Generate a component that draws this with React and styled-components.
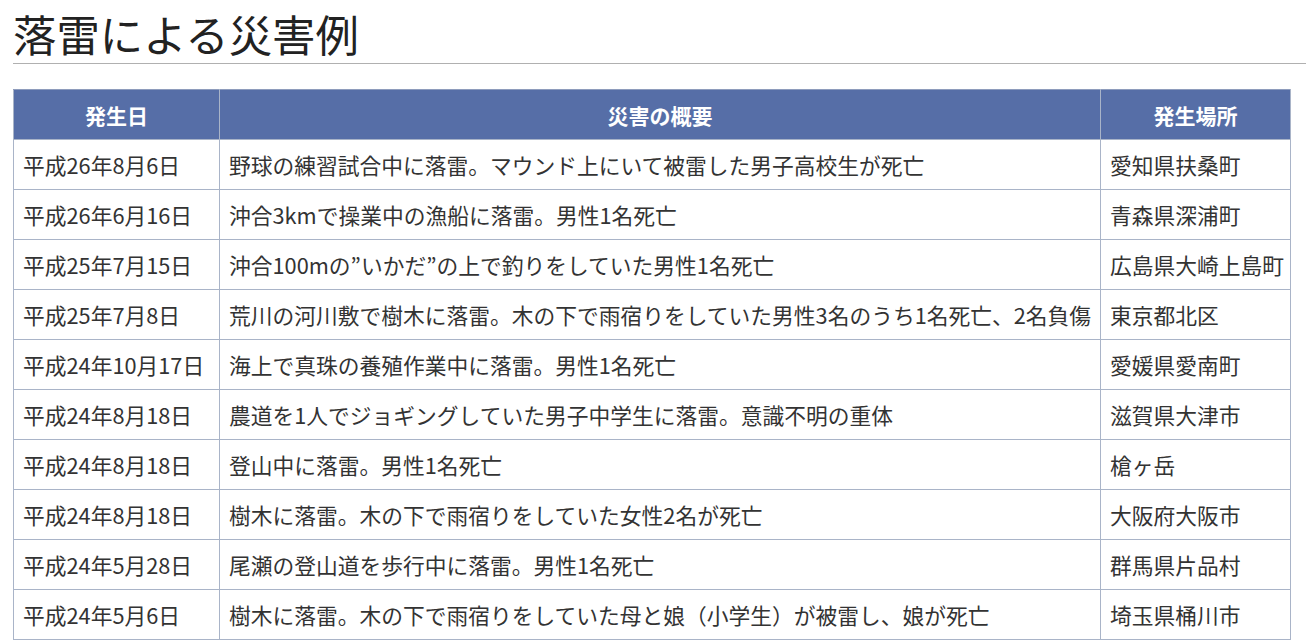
import styled, { createGlobalStyle } from 'styled-components';

const GlobalStyle = createGlobalStyle`
  body {
    margin: 0;
    background: #ffffff;
    font-family: "Noto Sans CJK JP", "Noto Sans", sans-serif;
    color: #333333;
  }
`;

const Page = styled.div`
  padding-left: 13px;
`;

const Title = styled.h1`
  margin: 0;
  padding-top: 3px;
  font-size: 43.4px;
  font-weight: 400;
  line-height: 60px;
  color: #222222;
  border-bottom: 1px solid #b0b0b0;
`;

const Table = styled.table`
  margin-top: 25px;
  width: 1277px;
  border-collapse: collapse;
  table-layout: fixed;
  font-size: 21.75px;
`;

const Th = styled.th`
  height: 49px;
  padding: 0;
  background: #566ea7;
  color: #ffffff;
  font-weight: 700;
  font-size: 21px;
  text-align: center;
  border: 1px solid #a9b4c8;
  border-top-color: #8e9cbc;
`;

const Td = styled.td`
  height: 49px;
  padding: 0 10px 0 9px;
  border: 1px solid #a9b4c8;
  white-space: nowrap;
  vertical-align: middle;
`;

const rows = [
  ['平成26年8月6日', '野球の練習試合中に落雷。マウンド上にいて被雷した男子高校生が死亡', '愛知県扶桑町'],
  ['平成26年6月16日', '沖合3kmで操業中の漁船に落雷。男性1名死亡', '青森県深浦町'],
  ['平成25年7月15日', '沖合100mの”いかだ”の上で釣りをしていた男性1名死亡', '広島県大崎上島町'],
  ['平成25年7月8日', '荒川の河川敷で樹木に落雷。木の下で雨宿りをしていた男性3名のうち1名死亡、2名負傷', '東京都北区'],
  ['平成24年10月17日', '海上で真珠の養殖作業中に落雷。男性1名死亡', '愛媛県愛南町'],
  ['平成24年8月18日', '農道を1人でジョギングしていた男子中学生に落雷。意識不明の重体', '滋賀県大津市'],
  ['平成24年8月18日', '登山中に落雷。男性1名死亡', '槍ヶ岳'],
  ['平成24年8月18日', '樹木に落雷。木の下で雨宿りをしていた女性2名が死亡', '大阪府大阪市'],
  ['平成24年5月28日', '尾瀬の登山道を歩行中に落雷。男性1名死亡', '群馬県片品村'],
  ['平成24年5月6日', '樹木に落雷。木の下で雨宿りをしていた母と娘（小学生）が被雷し、娘が死亡', '埼玉県桶川市'],
];

function App() {
  return (
    <Page>
      <GlobalStyle />
      <Title>落雷による災害例</Title>
      <Table>
        <colgroup>
          <col style={{ width: 206 }} />
          <col style={{ width: 881 }} />
          <col style={{ width: 190 }} />
        </colgroup>
        <thead>
          <tr>
            <Th>発生日</Th>
            <Th>災害の概要</Th>
            <Th>発生場所</Th>
          </tr>
        </thead>
        <tbody>
          {rows.map((r, i) => (
            <tr key={i}>
              <Td>{r[0]}</Td>
              <Td>{r[1]}</Td>
              <Td>{r[2]}</Td>
            </tr>
          ))}
        </tbody>
      </Table>
    </Page>
  );
}

export default App;
